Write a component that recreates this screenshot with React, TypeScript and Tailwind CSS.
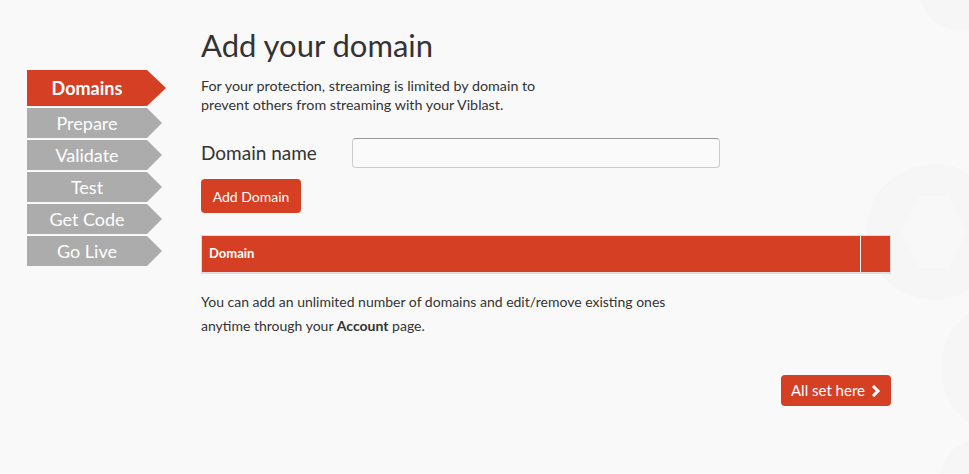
import React from "react";

const steps = ["Prepare", "Validate", "Test", "Get Code", "Go Live"];

export default function App() {
  return (
    <div className="relative min-h-[474px] w-full overflow-hidden bg-[#f9f9f9] font-['Lato','Open_Sans',sans-serif] text-[#333]">
      <svg className="absolute right-0 top-0" width="120" height="474" viewBox="0 0 120 474">
        <circle cx="110" cy="-10" r="40" fill="#f6f6f6" />
        <circle cx="85" cy="232" r="68" fill="#f6f6f6" />
        <path d="M70 196 L100 196 L118 232 L100 268 L70 268 L52 232 Z" fill="#f8f8f8" />
        <circle cx="160" cy="368" r="68" fill="#f6f6f6" />
        <circle cx="130" cy="480" r="40" fill="#f6f6f6" />
      </svg>
      <div className="relative flex pl-[27px]">
        <nav className="mt-[70px] flex w-[174px] shrink-0 flex-col gap-[2px]">
          <div className="flex h-[36px] w-[139px] items-center bg-[#d54024] pr-[19px] [clip-path:polygon(0_0,120px_0,100%_50%,120px_100%,0_100%)]">
            <span className="w-[120px] text-center text-[18px] font-bold text-white">Domains</span>
          </div>
          {steps.map((s) => (
            <div
              key={s}
              className="flex h-[30px] w-[135px] items-center bg-[#acacac] [clip-path:polygon(0_0,120px_0,100%_50%,120px_100%,0_100%)]"
            >
              <span className="w-[120px] text-center text-[18px] text-white">{s}</span>
            </div>
          ))}
        </nav>
        <main className="w-[690px] pt-[26px]">
          <h1 className="text-[31px] leading-[38px] text-[#333]">Add your domain</h1>
          <p className="mt-[12px] text-[14.3px] leading-[19px] text-[#333]">
            For your protection, streaming is limited by domain to
            <br />
            prevent others from streaming with your Viblast.
          </p>
          <div className="mt-[24px] flex items-center">
            <label className="w-[151px] text-[19px] text-[#333]">Domain name</label>
            <input className="h-[30px] w-[368px] rounded-[4px] border border-[#ccc] border-t-[#999] bg-[#fafafa] outline-none" />
          </div>
          <button className="mt-[11px] h-[34px] w-[100px] rounded-[4px] bg-[#d54024] text-[14px] text-white">
            Add Domain
          </button>
          <div className="mt-[22px] flex h-[39px] border border-[#ddd] border-b-2">
            <div className="flex flex-1 items-center border-r border-white bg-[#d54024] px-[7px] text-[13px] font-bold text-white">
              Domain
            </div>
            <div className="w-[29px] bg-[#d54024]" />
          </div>
          <p className="mt-[16px] text-[14px] leading-[24px] text-[#333]">
            You can add an unlimited number of domains and edit/remove existing ones
            <br />
            anytime through your <b>Account</b> page.
          </p>
          <div className="mt-[37px] flex justify-end">
            <button className="flex h-[31px] items-center gap-[6px] rounded-[4px] bg-[#d54024] px-[10px] text-[15px] text-white">
              All set here
              <svg width="10" height="12" viewBox="0 0 10 12">
                <path d="M2 1 L7 6 L2 11" stroke="white" strokeWidth="3" fill="none" />
              </svg>
            </button>
          </div>
        </main>
      </div>
    </div>
  );
}
